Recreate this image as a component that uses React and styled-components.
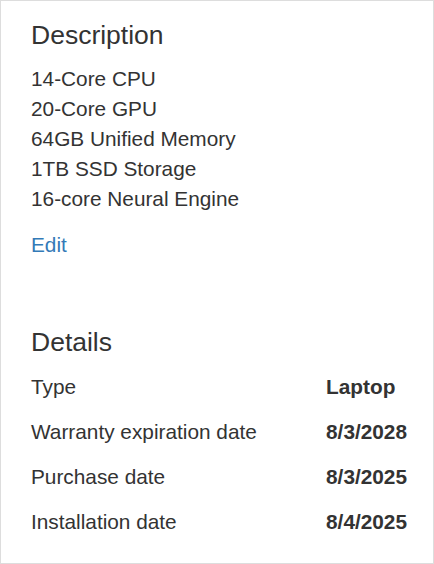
import React from 'react';
import styled, { createGlobalStyle } from 'styled-components';

const GlobalStyle = createGlobalStyle`
  html, body {
    margin: 0;
    padding: 0;
    background: #fff;
  }
  * {
    box-sizing: border-box;
  }
`;

const Card = styled.section`
  width: 434px;
  height: 564px;
  border: 1px solid #dddddd;
  padding: 18px 26px 0 30px;
  font-family: "Liberation Sans", Arial, sans-serif;
  color: #333333;
  display: flex;
  flex-direction: column;
`;

const Heading = styled.h2`
  margin: 0;
  font-size: 26.5px;
  font-weight: 400;
  line-height: 32px;
  margin-top: ${(p) => p.$top || 0}px;
`;

const SpecList = styled.ul`
  list-style: none;
  margin: 13px 0 0;
  padding: 0;
`;

const SpecItem = styled.li`
  font-size: 20.8px;
  line-height: 30px;
`;

const EditLink = styled.a`
  display: block;
  align-self: flex-start;
  margin-top: 16px;
  font-size: 20.8px;
  line-height: 30px;
  color: #337ab7;
  text-decoration: none;
  cursor: pointer;
`;

// one grid for all rows so the value column lines up on its left edge
const DetailGrid = styled.dl`
  margin: 14px 0 0;
  display: grid;
  grid-template-columns: 1fr auto;
  row-gap: 15px;
  font-size: 20.8px;
  line-height: 30px;
`;

const DetailRow = styled.div`
  display: contents;
`;

const Term = styled.dt`
  margin: 0;
`;

const Value = styled.dd`
  margin: 0;
  font-weight: 700;
  text-align: left;
`;

const specs = [
  '14-Core CPU',
  '20-Core GPU',
  '64GB Unified Memory',
  '1TB SSD Storage',
  '16-core Neural Engine',
];

const details = [
  ['Type', 'Laptop'],
  ['Warranty expiration date', '8/3/2028'],
  ['Purchase date', '8/3/2025'],
  ['Installation date', '8/4/2025'],
];

const App = () => {
  return (
    <>
      <GlobalStyle />
      <Card>
        <Heading>Description</Heading>
        <SpecList>
          {specs.map((s) => (
            <SpecItem key={s}>{s}</SpecItem>
          ))}
        </SpecList>
        <EditLink>Edit</EditLink>

        <Heading $top={66}>Details</Heading>
        <DetailGrid>
          {details.map(([label, value]) => (
            <DetailRow key={label}>
              <Term>{label}</Term>
              <Value>{value}</Value>
            </DetailRow>
          ))}
        </DetailGrid>
      </Card>
    </>
  );
};

export default App;
